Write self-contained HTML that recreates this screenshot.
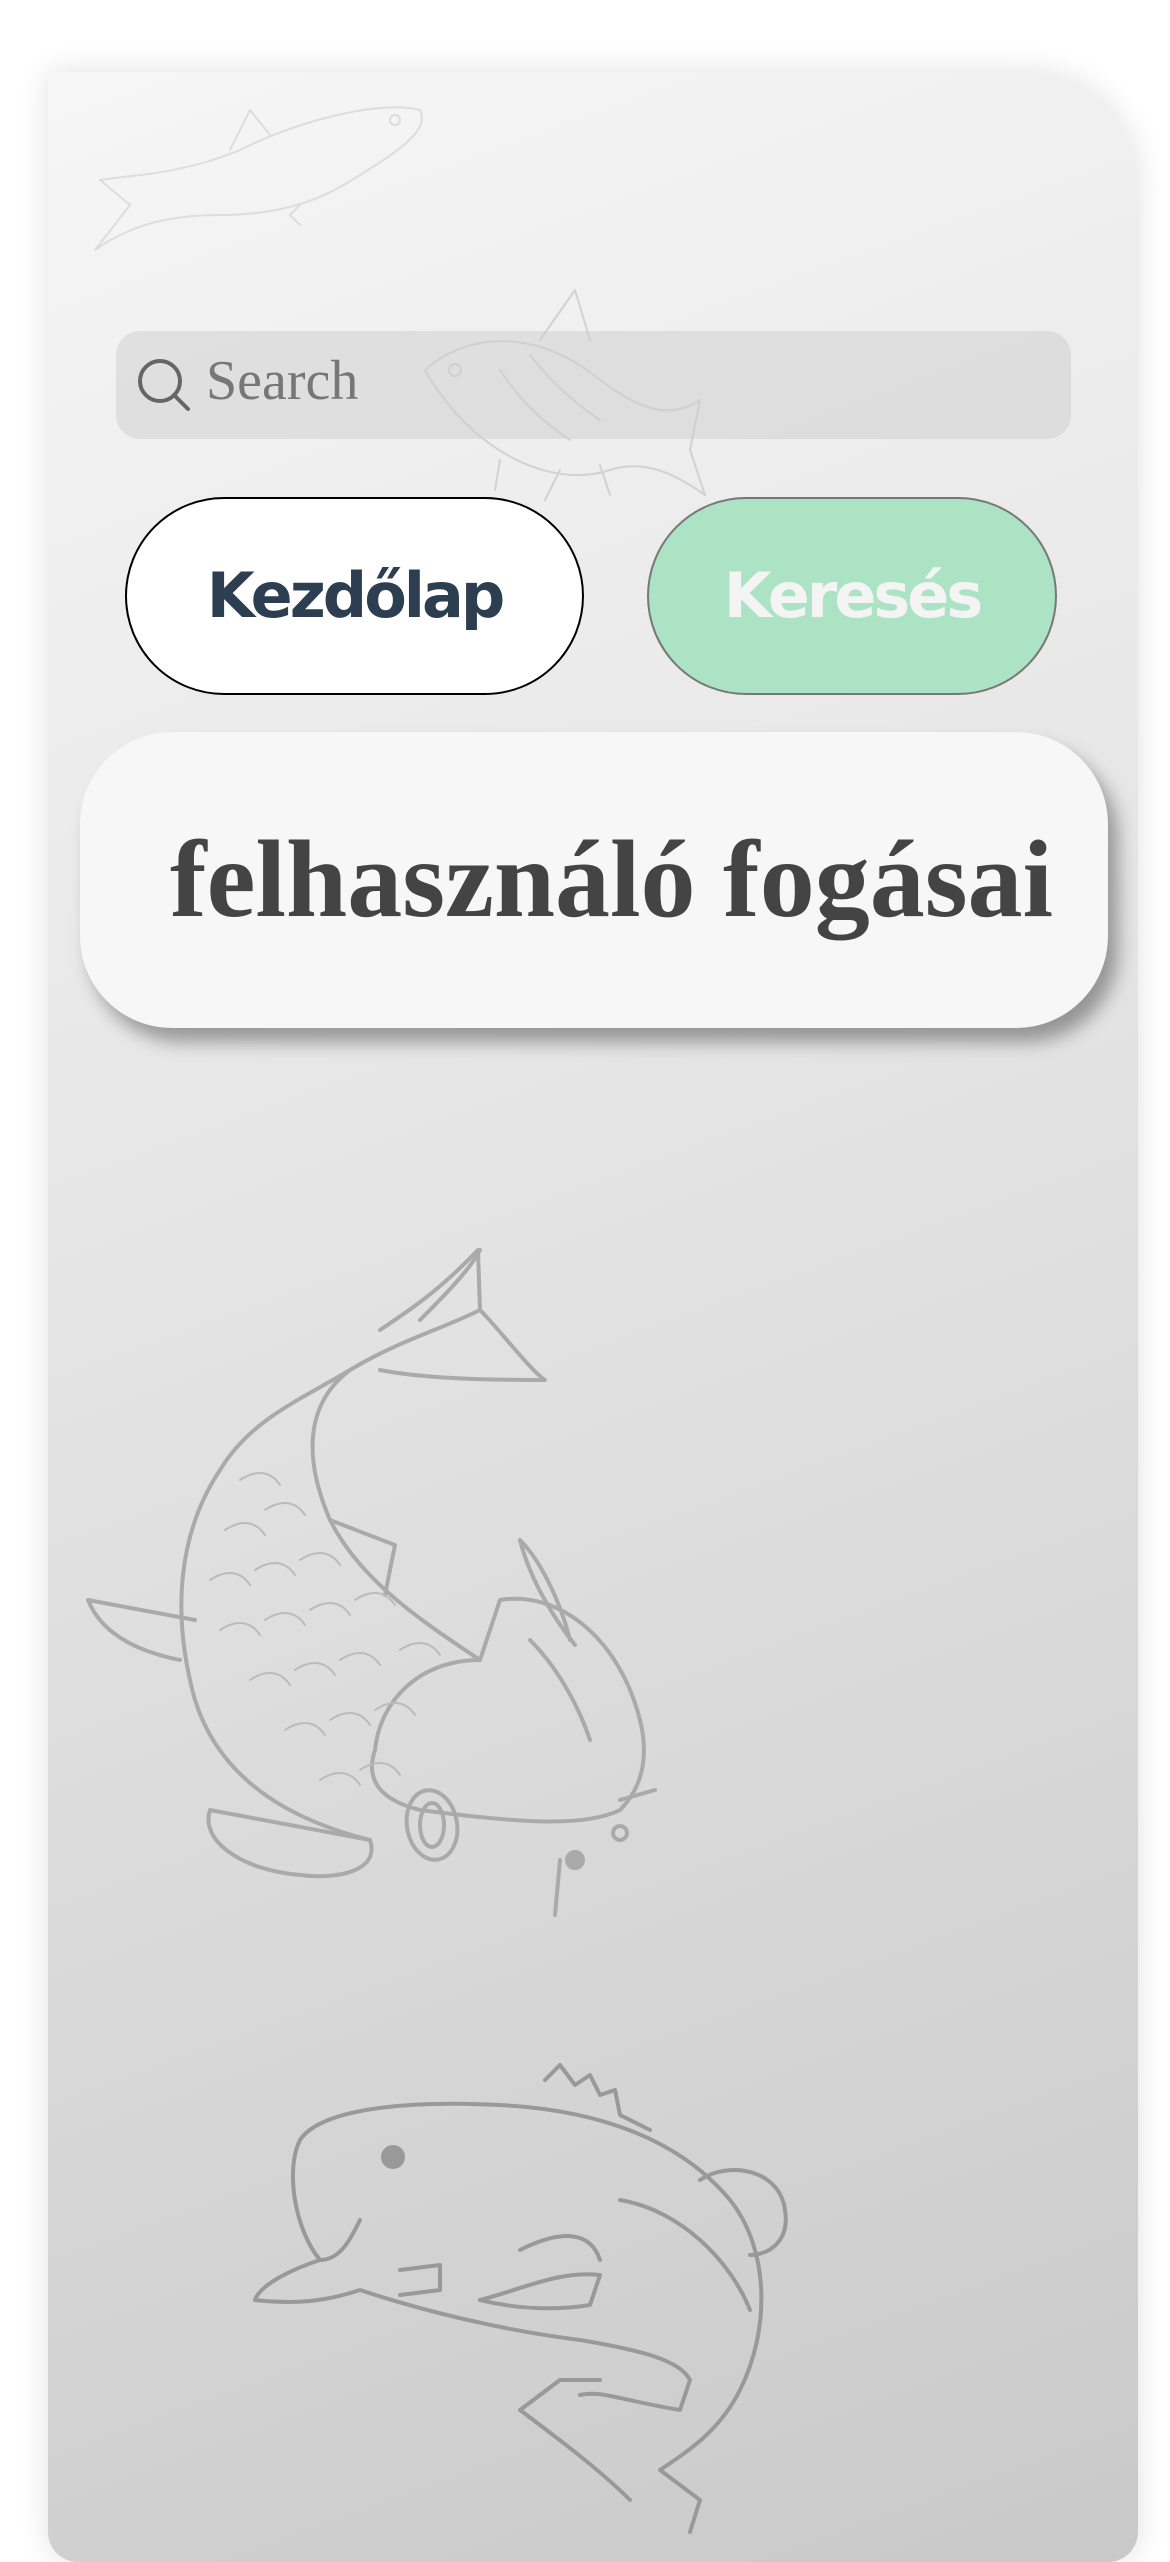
<!DOCTYPE html>
<html><head><meta charset="utf-8"><style>
html,body{margin:0;padding:0;}
body{width:1170px;height:2532px;background:#fff;position:relative;overflow:hidden;font-family:"Liberation Sans",sans-serif;}
.page{position:absolute;left:48px;top:72px;width:1090px;height:2490px;border-radius:0 110px 30px 30px;background:linear-gradient(160deg,#f6f6f6 0%,#e6e6e6 40%,#c9c9c9 100%);box-shadow:0 0 30px rgba(0,0,0,0.12);overflow:hidden;}
svg{position:absolute;left:0;top:0;}
.search{position:absolute;left:116px;top:331px;width:955px;height:108px;border-radius:24px;background:rgba(205,205,205,0.5);}
.search span{position:absolute;left:90px;top:18px;font-family:"Liberation Serif",serif;font-size:56px;color:#777;}
.btn{position:absolute;top:497px;height:198px;border-radius:100px;box-sizing:border-box;text-align:center;line-height:194px;font-family:"DejaVu Sans",sans-serif;font-weight:bold;font-size:62px;letter-spacing:-3px;}
.b1{left:125px;width:459px;background:#fff;border:2px solid #000;color:#2c3e50;}
.b2{left:647px;width:410px;background:#abe3c4;border:2px solid #777;color:#f4f4f4;}
.card{position:absolute;left:80px;top:732px;width:1028px;height:296px;border-radius:92px;background:#f7f7f7;box-shadow:10px 14px 18px rgba(0,0,0,0.35);}
.card span{position:absolute;left:90px;top:92px;font-family:"Liberation Serif",serif;font-weight:bold;font-size:110px;line-height:1;color:#444;white-space:nowrap;}
</style></head><body>
<div class="page">
<svg width="1090" height="2490" viewBox="48 72 1090 2490" fill="none" stroke-linecap="round" stroke-linejoin="round">
 <g stroke="#ddd" stroke-width="2">
  <path d="M420 110 C380 100 300 120 240 150 C180 175 130 175 100 180 L130 205 L95 250 C130 225 170 215 220 215 C290 215 330 195 360 175 C400 150 430 130 420 110 Z"/>
  <path d="M230 150 L250 110 L270 135"/><path d="M300 205 L290 215 L300 225"/>
  <circle cx="395" cy="120" r="5"/>
 </g>
 <g stroke="#d2d2d2" stroke-width="2">
  <path d="M425 370 C470 330 540 330 600 380 C640 410 670 420 700 400 L690 450 L705 495 C670 470 640 460 610 470 C550 490 470 450 425 370 Z"/>
  <path d="M540 340 L575 290 L590 340"/><path d="M500 460 L495 490 M560 470 L545 500 M600 465 L610 495"/>
  <circle cx="455" cy="370" r="6"/>
  <path d="M500 370 C520 400 540 420 570 440 M530 355 C550 380 570 400 600 420"/>
 </g>
 <g stroke="#aaa" stroke-width="4">
  <path d="M350 1370 C300 1400 250 1420 220 1470 C180 1530 170 1610 195 1700 C220 1780 290 1820 370 1840"/>
  <path d="M350 1370 C310 1400 300 1450 330 1520 C360 1580 420 1620 480 1660"/>
  <path d="M330 1520 L395 1545 L385 1595"/>
  <path d="M350 1370 C400 1340 440 1330 480 1310 L478 1250 C440 1290 410 1310 380 1330 M480 1310 C500 1330 530 1370 545 1380 C510 1380 430 1380 380 1370"/>
  <path d="M480 1250 C470 1270 440 1300 420 1320"/>
  <path d="M195 1620 L88 1600 C100 1630 130 1650 180 1660"/>
  <path d="M370 1840 L210 1810 C200 1840 240 1870 300 1875 C340 1880 380 1870 370 1840"/>
  <path d="M500 1600 C560 1590 620 1640 640 1720 C650 1760 640 1790 620 1810 C580 1830 500 1820 420 1810 C380 1800 365 1780 375 1750 C380 1700 420 1660 480 1660 Z"/>
  <path d="M520 1540 C530 1580 555 1620 575 1645 M520 1540 C540 1560 560 1600 570 1640"/>
  <ellipse cx="432" cy="1825" rx="25" ry="35" transform="rotate(-10 432 1825)"/>
  <ellipse cx="432" cy="1825" rx="12" ry="22"/>
  <path d="M530 1640 C560 1670 580 1710 590 1740"/>
  <path d="M560 1860 L555 1915 M620 1800 L655 1790"/>
  <circle cx="575" cy="1860" r="8" fill="#aaa"/>
  <circle cx="620" cy="1833" r="7"/>
 </g>
 <g stroke="#bbb" stroke-width="2">
  <path d="M240 1480 c15 -10 30 -10 40 5 M225 1530 c15 -10 30 -10 40 5 M265 1510 c15 -10 30 -10 40 5 M210 1580 c15 -10 30 -10 40 5 M255 1570 c15 -10 30 -10 40 5 M300 1560 c15 -10 30 -10 40 5 M220 1630 c15 -10 30 -10 40 5 M265 1620 c15 -10 30 -10 40 5 M310 1610 c15 -10 30 -10 40 5 M355 1600 c15 -10 30 -10 40 5 M250 1680 c15 -10 30 -10 40 5 M295 1670 c15 -10 30 -10 40 5 M340 1660 c15 -10 30 -10 40 5 M400 1650 c15 -10 30 -10 40 5 M285 1730 c15 -10 30 -10 40 5 M330 1720 c15 -10 30 -10 40 5 M375 1710 c15 -10 30 -10 40 5 M320 1780 c15 -10 30 -10 40 5 M360 1770 c15 -10 30 -10 40 5"/>
 </g>
 <g stroke="#999" stroke-width="4">
  <path d="M300 2140 C320 2110 400 2100 500 2105 C600 2110 680 2140 730 2200 C770 2250 770 2330 740 2390 C720 2430 690 2450 660 2470 L700 2500 L690 2532"/>
  <path d="M300 2140 C285 2170 295 2230 320 2260 C290 2270 260 2285 255 2300 C300 2305 330 2300 360 2290 C420 2310 500 2330 580 2340 C640 2350 680 2360 690 2380 L680 2410 C620 2400 600 2390 580 2395"/>
  <path d="M545 2080 L560 2065 L575 2085 L590 2075 L600 2095 L615 2090 L620 2115 L650 2130"/>
  <path d="M700 2180 C730 2160 780 2170 785 2210 C790 2240 770 2255 750 2255"/>
  <path d="M400 2270 L440 2265 L440 2290 L400 2295 M480 2300 C520 2290 560 2270 600 2275 L590 2305 C560 2310 520 2310 480 2300"/>
  <path d="M520 2250 C560 2230 590 2230 600 2260 M600 2380 L560 2380 L520 2410 C560 2440 600 2470 630 2500"/>
  <path d="M320 2260 C340 2260 350 2240 360 2220 M620 2200 C680 2210 730 2260 750 2310"/>
  <circle cx="393" cy="2157" r="10" fill="#999"/>
 </g>
</svg>
</div>
<div class="search">
 <svg width="60" height="60" style="left:18px;top:24px" viewBox="0 0 60 60"><circle cx="26" cy="26" r="20" stroke="#666" stroke-width="4" fill="none"/><path d="M40 40 L54 54" stroke="#666" stroke-width="4" stroke-linecap="round"/></svg>
 <span>Search</span>
</div>
<div class="btn b1">Kezdőlap</div>
<div class="btn b2">Keresés</div>
<div class="card"><span>felhasználó fogásai</span></div>
</body></html>
